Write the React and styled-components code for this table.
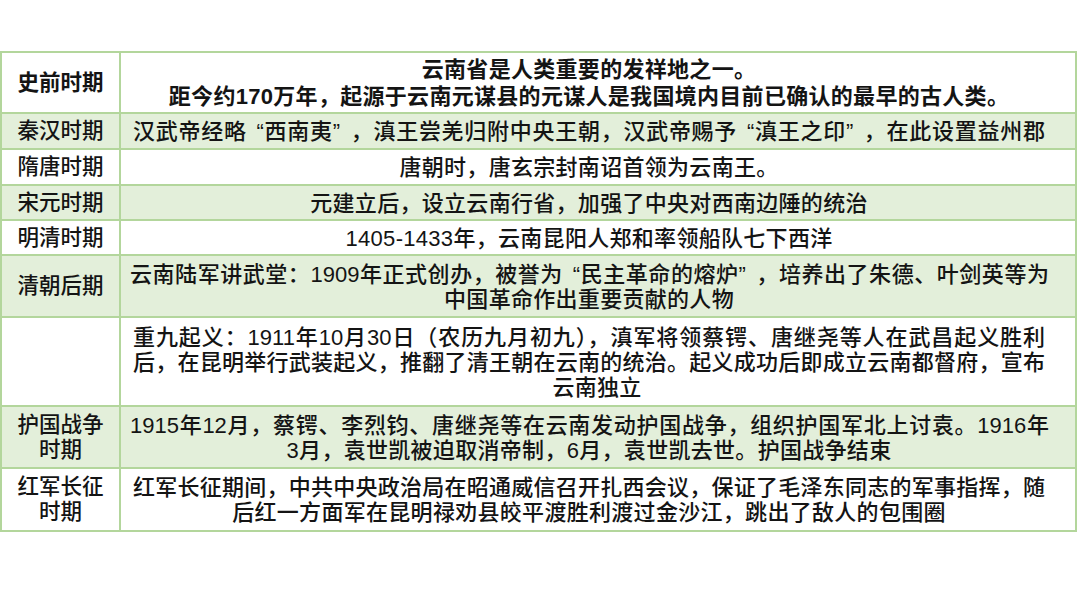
import React from "react";
import styled, { createGlobalStyle } from "styled-components";

const GlobalStyle = createGlobalStyle`
  html, body {
    margin: 0;
    padding: 0;
    background: #ffffff;
  }
  body {
    font-family: "Liberation Sans", "Noto Sans CJK SC", sans-serif;
    color: #141414;
  }
`;

// full: the line runs the whole width of the cell in the picture
const rows = [
  {
    label: ["史前时期"],
    lines: [
      { text: "云南省是人类重要的发祥地之一。" },
      { text: "距今约170万年，起源于云南元谋县的元谋人是我国境内目前已确认的最早的古人类。" },
    ],
    height: 61,
    bold: true,
    spread: 27,
  },
  {
    label: ["秦汉时期"],
    lines: [
      {
        text: "汉武帝经略“西南夷”，滇王尝羌归附中央王朝，汉武帝赐予“滇王之印”，在此设置益州郡",
        full: true,
      },
    ],
    height: 36,
    green: true,
  },
  {
    label: ["隋唐时期"],
    lines: [{ text: "唐朝时，唐玄宗封南诏首领为云南王。" }],
    height: 36,
  },
  {
    label: ["宋元时期"],
    lines: [{ text: "元建立后，设立云南行省，加强了中央对西南边陲的统治" }],
    height: 35,
    green: true,
  },
  {
    label: ["明清时期"],
    lines: [{ text: "1405-1433年，云南昆阳人郑和率领船队七下西洋" }],
    height: 35,
  },
  {
    label: ["清朝后期"],
    lines: [
      {
        text: "云南陆军讲武堂：1909年正式创办，被誉为“民主革命的熔炉”，培养出了朱德、叶剑英等为",
        full: true,
        wide: true,
      },
      { text: "中国革命作出重要贡献的人物" },
    ],
    height: 62,
    green: true,
  },
  {
    label: [],
    lines: [
      {
        text: "重九起义：1911年10月30日（农历九月初九），滇军将领蔡锷、唐继尧等人在武昌起义胜利",
        full: true,
      },
      {
        text: "后，在昆明举行武装起义，推翻了清王朝在云南的统治。起义成功后即成立云南都督府，宣布",
        full: true,
      },
      { text: "云南独立", shift: 16 },
    ],
    height: 89,
  },
  {
    label: ["护国战争", "时期"],
    lines: [
      {
        text: "1915年12月，蔡锷、李烈钧、唐继尧等在云南发动护国战争，组织护国军北上讨袁。1916年",
        full: true,
        wide: true,
      },
      { text: "3月，袁世凯被迫取消帝制，6月，袁世凯去世。护国战争结束" },
    ],
    height: 62,
    green: true,
  },
  {
    label: ["红军长征", "时期"],
    lines: [
      {
        text: "红军长征期间，中共中央政治局在昭通威信召开扎西会议，保证了毛泽东同志的军事指挥，随",
        full: true,
      },
      { text: "后红一方面军在昆明禄劝县皎平渡胜利渡过金沙江，跳出了敌人的包围圈" },
    ],
    height: 63,
  },
];

function renderText(text) {
  return text.split(/([“”])/).map((part, i) => {
    if (part === "“") return <Quote key={i} $open>“</Quote>;
    if (part === "”") return <Quote key={i}>”</Quote>;
    return <React.Fragment key={i}>{part}</React.Fragment>;
  });
}

export default function App() {
  return (
    <Page>
      <GlobalStyle />
      <Table>
        {rows.map((row, i) => (
          <Row key={i} $green={row.green} $height={row.height}>
            <LabelCell $bold={row.bold}>
              {row.label.map((l, j) => (
                <Line key={j}>{l}</Line>
              ))}
            </LabelCell>
            <TextCell $bold={row.bold} $spread={row.spread}>
              {row.lines.map((l, j) => (
                <Line
                  key={j}
                  $full={l.full}
                  $wide={l.wide}
                  style={l.shift ? { marginLeft: l.shift } : undefined}
                >
                  {renderText(l.text)}
                </Line>
              ))}
            </TextCell>
          </Row>
        ))}
      </Table>
    </Page>
  );
}

const Page = styled.div`
  width: 1080px;
  height: 608px;
  padding-top: 51px;
  box-sizing: border-box;
  overflow: hidden;
`;

const Table = styled.div`
  width: 1077px;
  display: flex;
  flex-direction: column;
  border-top: 2px solid #b3d69c;
  border-left: 2px solid #b3d69c;
  box-sizing: border-box;
`;

const Row = styled.div`
  display: grid;
  grid-template-columns: 119px 1fr;
  height: ${(p) => p.$height}px;
  background: ${(p) => (p.$green ? "#e3efda" : "#ffffff")};
  border-bottom: 2px solid #b3d69c;
  box-sizing: border-box;
`;

const Cell = styled.div`
  display: flex;
  flex-direction: column;
  justify-content: center;
  align-items: center;
  text-align: center;
  border-right: 2px solid #b3d69c;
  font-size: 21.5px;
  line-height: ${(p) => p.$spread || 25}px;
  font-weight: ${(p) => (p.$bold ? 700 : 500)};
  white-space: nowrap;
  overflow: hidden;
`;

const LabelCell = styled(Cell)`
  padding-top: 1px;
`;

const TextCell = styled(Cell)`
  padding: 1px 30px 0 12px;
  font-size: 22px;
  letter-spacing: 0.3px;
`;

const Line = styled.div`
  display: block;
  ${(p) =>
    p.$full &&
    `
    align-self: stretch;
    margin: 0 ${p.$wide ? -4 : 0}px 0 ${p.$wide ? -3 : 0}px;
    text-align: justify;
    text-align-last: justify;
    white-space: normal;
    letter-spacing: 0;
  `}
`;

const Quote = styled.span`
  padding-left: ${(p) => (p.$open ? "0.45em" : "0")};
  padding-right: ${(p) => (p.$open ? "0" : "0.45em")};
`;
